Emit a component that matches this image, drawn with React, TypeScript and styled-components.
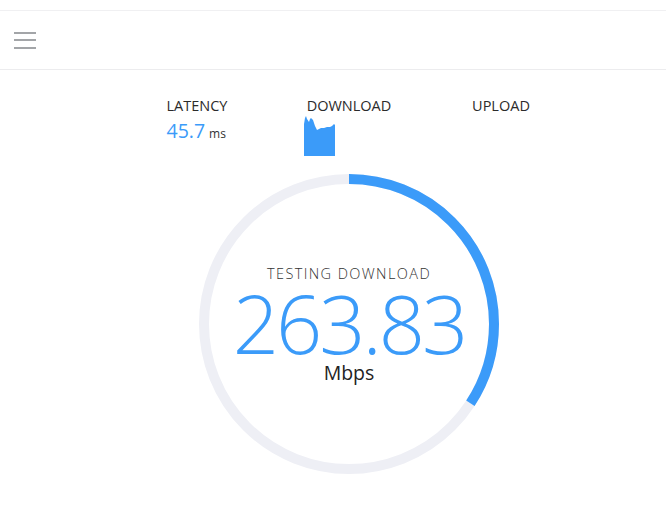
import React from "react";
import styled, { createGlobalStyle } from "styled-components";

const BLUE = "#3b9bf9";

const GlobalStyle = createGlobalStyle`
  html, body {
    margin: 0;
    padding: 0;
    background: #ffffff;
    font-family: "Open Sans", "Noto Sans", sans-serif;
    color: #333;
  }
`;

const Page = styled.div`
  width: 666px;
  min-height: 524px;
  border-top: 10px solid #ffffff;
`;

const TopBar = styled.header`
  height: 58px;
  display: flex;
  align-items: center;
  padding-left: 14px;
  border-top: 1px solid #f0f0f2;
  border-bottom: 1px solid #ececee;
`;

const Burger = styled.button`
  display: flex;
  flex-direction: column;
  gap: 5.5px;
  padding: 0;
  border: none;
  background: none;
  span {
    display: block;
    width: 22px;
    height: 2px;
    background: #a3a5a8;
  }
`;

const Main = styled.main`
  padding-left: 32px;
  display: flex;
  flex-direction: column;
  align-items: center;
`;

const Stats = styled.div`
  display: grid;
  grid-template-columns: repeat(3, 152px);
  justify-items: center;
  padding-top: 26px;
  height: 60px;
`;

const Stat = styled.div`
  display: flex;
  flex-direction: column;
  align-items: flex-start;
`;

const Label = styled.div`
  font-size: 14.5px;
  line-height: 20px;
  color: #2b2b2b;
`;

const Value = styled.div`
  margin-top: 4px;
  font-size: 19.5px;
  line-height: 22px;
  color: ${BLUE};
  small {
    font-size: 12px;
    color: #333;
    margin-left: 4px;
  }
`;

const Spark = styled.svg`
  margin-top: 0px;
  margin-left: -3px;
`;

const Gauge = styled.div`
  margin-top: 18px;
  display: grid;
  width: 300px;
  height: 300px;
  > * {
    grid-area: 1 / 1;
  }
`;

const Ring = styled.svg`
  transform: rotate(-90deg);
`;

const Readout = styled.div`
  display: flex;
  flex-direction: column;
  align-items: center;
  justify-content: center;
`;

const Phase = styled.div`
  font-size: 14.5px;
  letter-spacing: 1.4px;
  font-weight: 300;
  color: #333;
  line-height: 18px;
`;

const Speed = styled.div`
  margin-top: 8px;
  font-size: 81px;
  font-weight: 300;
  line-height: 64px;
  letter-spacing: -3px;
  color: ${BLUE};
`;

const Unit = styled.div`
  margin-top: 8px;
  font-size: 19.5px;
  line-height: 20px;
  color: #222;
`;

const R = 145;
const C = 2 * Math.PI * R;
const progress = 0.342;

export default function App() {
  return (
    <Page>
      <GlobalStyle />
      <TopBar>
        <Burger aria-label="menu">
          <span />
          <span />
          <span />
        </Burger>
      </TopBar>
      <Main>
        <Stats>
          <Stat>
            <Label>LATENCY</Label>
            <Value>
              45.7<small>ms</small>
            </Value>
          </Stat>
          <Stat>
            <Label>DOWNLOAD</Label>
            <Spark width="32" height="40" viewBox="0 0 32 40">
              <path
                d="M0 40 L0 8 L1 2 L2 0 L3 3 L5 6 L6 3 L7 2 L9 4 L11 10 L13 14 L15 13 L17 12 L20 12 L23 11 L26 11 L28 10 L30 8 L31 9 L31 40 Z"
                fill={BLUE}
              />
            </Spark>
          </Stat>
          <Stat>
            <Label>UPLOAD</Label>
          </Stat>
        </Stats>
        <Gauge>
          <Ring width="300" height="300" viewBox="0 0 300 300">
            <circle cx="150" cy="150" r={R} fill="none" stroke="#eeeff5" strokeWidth="10" />
            <circle
              cx="150"
              cy="150"
              r={R}
              fill="none"
              stroke={BLUE}
              strokeWidth="10"
              strokeDasharray={`${C * progress} ${C}`}
            />
          </Ring>
          <Readout>
            <Phase>TESTING DOWNLOAD</Phase>
            <Speed>263.83</Speed>
            <Unit>Mbps</Unit>
          </Readout>
        </Gauge>
      </Main>
    </Page>
  );
}
